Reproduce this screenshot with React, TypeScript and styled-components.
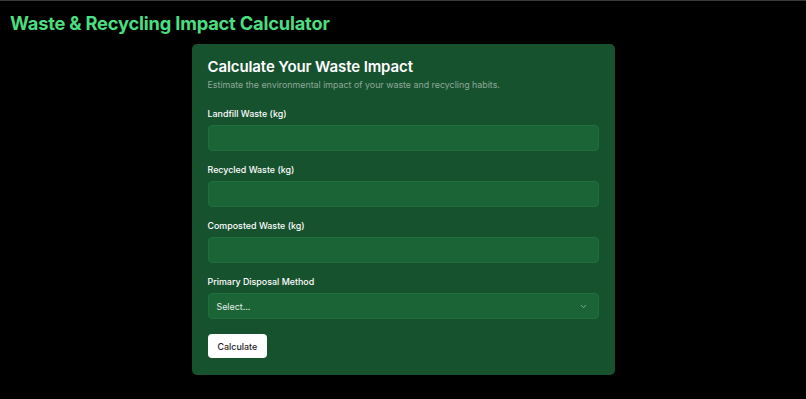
import styled, { createGlobalStyle } from 'styled-components';

const Global = createGlobalStyle`
  html, body {
    margin: 0;
    background: #000;
    font-family: Inter, "Noto Sans", sans-serif;
  }
`;

const Page = styled.div`
  min-height: 399px;
  box-sizing: border-box;
  border-top: 1px solid #3b3b3b;
  background: #000;
`;

const Header = styled.h1`
  margin: 0;
  padding: 10px 10px 0;
  font-size: 18.3px;
  line-height: 24px;
  font-weight: 700;
  color: #4ade80;
  letter-spacing: -0.2px;
`;

const Card = styled.form`
  width: 423px;
  box-sizing: border-box;
  margin: 9px auto 0;
  padding: 12px 16px 17px;
  background: #17522f;
  border-radius: 5px;
  display: flex;
  flex-direction: column;
`;

const Title = styled.h2`
  margin: 0;
  font-size: 15px;
  line-height: 22px;
  font-weight: 600;
  color: #fff;
  letter-spacing: -0.1px;
`;

const Subtitle = styled.p`
  margin: 0;
  font-size: 8.85px;
  line-height: 14px;
  color: #8fa898;
`;

const Field = styled.div<{ $first?: boolean }>`
  display: flex;
  flex-direction: column;
  gap: 4px;
  margin-top: ${p => (p.$first ? '15px' : '12px')};
`;

const Label = styled.label`
  font-size: 8.9px;
  line-height: 14px;
  font-weight: 500;
  color: #fff;
`;

const Input = styled.input`
  height: 26px;
  box-sizing: border-box;
  border: 1px solid #1f6e3c;
  border-radius: 4px;
  background: #1a6436;
  color: #fff;
  padding: 0 8px;
  font-family: inherit;
  outline: none;
`;

const SelectBox = styled.div`
  height: 26px;
  box-sizing: border-box;
  border: 1px solid #1f6e3c;
  border-radius: 4px;
  background: #1a6436;
  color: #e6efe9;
  padding: 0 10px 0 8px;
  display: flex;
  align-items: center;
  justify-content: space-between;
  font-size: 8.9px;
`;

const Button = styled.button`
  margin-top: 15px;
  align-self: flex-start;
  height: 24px;
  padding: 0 10px;
  border: none;
  border-radius: 4px;
  background: #fff;
  color: #222;
  font-family: inherit;
  font-size: 8.9px;
  font-weight: 500;
`;

const fields = ['Landfill Waste (kg)', 'Recycled Waste (kg)', 'Composted Waste (kg)'];

export default function App() {
  return (
    <Page>
      <Global />
      <Header>Waste &amp; Recycling Impact Calculator</Header>
      <Card onSubmit={e => e.preventDefault()}>
        <Title>Calculate Your Waste Impact</Title>
        <Subtitle>Estimate the environmental impact of your waste and recycling habits.</Subtitle>
        {fields.map((f, i) => (
          <Field key={f} $first={i === 0}>
            <Label>{f}</Label>
            <Input type="number" />
          </Field>
        ))}
        <Field>
          <Label>Primary Disposal Method</Label>
          <SelectBox>
            <span>Select...</span>
            <svg width="9" height="9" viewBox="0 0 24 24" fill="none" stroke="#8fb39c" strokeWidth="2.5" strokeLinecap="round" strokeLinejoin="round">
              <path d="m6 9 6 6 6-6" />
            </svg>
          </SelectBox>
        </Field>
        <Button type="submit">Calculate</Button>
      </Card>
    </Page>
  );
}
